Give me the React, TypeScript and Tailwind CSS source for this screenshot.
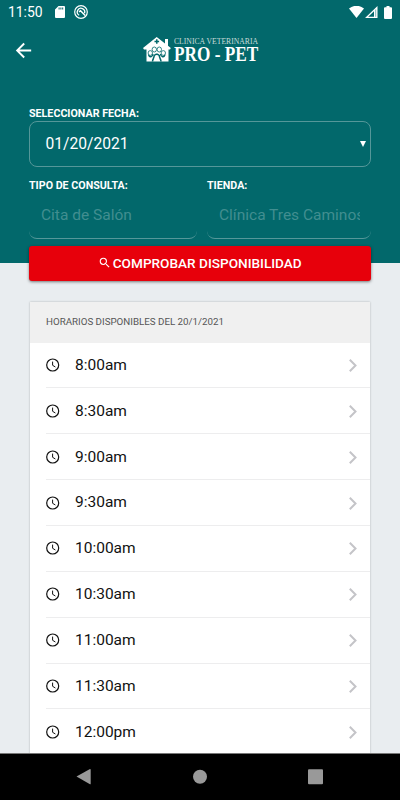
import React from "react";
import { MdArrowBack, MdSearch } from "react-icons/md";

const hours = [
  "8:00am",
  "8:30am",
  "9:00am",
  "9:30am",
  "10:00am",
  "10:30am",
  "11:00am",
  "11:30am",
  "12:00pm",
];

const StatusBar = () => {
  return (
    <div className="flex h-6 items-center pl-2 pr-[7px]">
      <span className="w-[47px] text-[13.9px] leading-6">11:50</span>
      <svg className="h-3 w-[10px]" viewBox="0 0 10 12">
        <path
          fill="#fff"
          fillRule="evenodd"
          d="M3.5 0H9a1 1 0 0 1 1 1v10a1 1 0 0 1-1 1H1a1 1 0 0 1-1-1V3.5zM3.6 1.6v2h1v-2zM5.4 1.6v2h1v-2zM7.2 1.6v2h1v-2z"
        />
      </svg>
      <svg className="ml-[9px] h-[14px] w-[14px]" viewBox="0 0 14 14" fill="none" stroke="#fff">
        <circle cx="7" cy="7" r="6.3" strokeWidth="1.2" />
        <path d="M5.2 10.2A3.7 3.7 0 1 1 10.5 8.2" strokeWidth="1.3" />
        <path d="M5 6.8 6.5 5.8l4.7 4.7" strokeWidth="1.5" />
      </svg>
      <div className="ml-auto flex items-center">
        <svg className="h-3 w-[15px]" viewBox="0 0 15 12">
          <path fill="#fff" d="M0 2.6a11.4 11.4 0 0 1 15 0L7.5 12z" />
        </svg>
        <svg className="ml-px h-3 w-[13px]" viewBox="0 0 13 12">
          <path fill="#fff" fillRule="evenodd" d="M12.5 0v12H0zM9 5.2 3.2 10.7H9z" />
          <path fill="#02686b" d="M10.2 3.6h1v7.2h-1z" opacity=".5" />
        </svg>
        <svg className="mr-px ml-[6px] h-[13px] w-[8px]" viewBox="0 0 8 13">
          <path fill="#fff" d="M2.5 0h3v1.2H7a1 1 0 0 1 1 1V12a1 1 0 0 1-1 1H1a1 1 0 0 1-1-1V2.2a1 1 0 0 1 1-1h1.5z" />
        </svg>
      </div>
    </div>
  );
};

const Logo = () => {
  return (
    <div className="flex h-[28px] w-[116px]">
      <svg className="h-[28px] w-[29px] shrink-0" viewBox="0 0 29 28">
        <path fill="#fff" d="M13.7 1 0 12l1 1.500h2.500V25.500h22V13.500h1.500l.8-1.500-2.800-2.200V3h-3v4.500z" />
        <path stroke="#02686b" strokeWidth="1.5" d="M13.800 3.200v4.600M11.500 5.500h4.600" />
        <path
          stroke="#02686b"
          strokeWidth="1.5"
          fill="none"
          d="M5.500 18.500c1 3.500 4 2.500 4.500-.5M22 18.500c-1 3.500-4 2.500-4.500-.5M9.500 25.500c0-2.500 1.800-3.500 1.800-6.500M18 25.500c0-2.500-1.800-3.500-1.800-6.500"
        />
        <g fill="#fff" stroke="#02686b" strokeWidth=".8">
          <ellipse cx="7.300" cy="17" rx="2.200" ry="2.400" />
          <ellipse cx="11.300" cy="13.500" rx="2.200" ry="2.500" />
          <ellipse cx="16.300" cy="13.500" rx="2.200" ry="2.500" />
          <ellipse cx="20.300" cy="17" rx="2.200" ry="2.400" />
        </g>
        <path fill="#02686b" d="M11 19c1-2 4.500-2 5.500 0l-1 .8c-.7-1-2.800-1-3.500 0z" />
      </svg>
      <div className="ml-[2px] pt-px font-['Liberation_Serif',serif]">
        <p className="h-[9px] w-[90px] origin-left scale-x-[0.925] whitespace-nowrap text-[8.3px] leading-[9px] text-[#c9dcd9]">
          CLINICA VETERINARIA
        </p>
        <p className="h-[17px] w-[96px] origin-left scale-x-[0.84] whitespace-nowrap text-[20.5px] font-bold leading-[17px]">
          PRO - PET
        </p>
      </div>
    </div>
  );
};

interface FieldProps {
  label: string;
  value: string;
}

const Field = ({ label, value }: FieldProps) => {
  return (
    <div className="min-w-0">
      <p className="text-[10.7px] font-bold leading-[15px]">{label}</p>
      <div className="relative flex h-[46px] items-center pr-[11px] pl-3">
        <div className="absolute inset-x-0 bottom-0 h-2 rounded-b-lg border-b border-[#559799]" />
        <p className="w-full overflow-hidden whitespace-nowrap text-[15.5px] text-[#418e90]">{value}</p>
      </div>
    </div>
  );
};

const Row = ({ hour }: { hour: string }) => {
  return (
    <div className="flex h-[45.85px] shrink-0 pl-[15.5px]">
      <div className="flex h-full flex-1 items-center border-b-[1.5px] border-[#ededee] pr-[13px]">
        <svg className="size-[14px]" viewBox="0 0 14 14" fill="none" stroke="#111">
          <circle cx="6.7" cy="7" r="6" strokeWidth="1.2" />
          <path d="M6.6 3.6v3.7l2.8 1.7" strokeWidth="1" />
        </svg>
        <span className="ml-[15.5px] pt-px text-[15.5px] text-[#111]">{hour}</span>
        <svg className="mt-px ml-auto h-[13px] w-2" viewBox="0 0 8 13" fill="none" stroke="#c4c4c8" strokeWidth="2">
          <path d="m.8.8 5.700 5.700-5.700 5.700" />
        </svg>
      </div>
    </div>
  );
};

export default function App() {
  return (
    <div className="flex h-[800px] w-[400px] flex-col overflow-hidden bg-[#e9edf0] font-[Roboto,sans-serif]">
      <header className="h-[263px] shrink-0 bg-[#02686b] text-white">
        <StatusBar />
        <div className="flex h-[52px] items-center pl-3">
          <MdArrowBack className="size-[23px]" />
          <div className="ml-[108px]">
            <Logo />
          </div>
        </div>
        <div className="px-[29px] pt-[30px]">
          <p className="text-[10.7px] font-bold leading-[15px]">SELECCIONAR FECHA:</p>
          <div className="flex h-[46px] items-center justify-between rounded-lg border border-[#559799] pr-1 pl-[15.5px]">
            <span className="pt-[2px] text-[15.6px]">01/20/2021</span>
            <svg className="h-[6px] w-[6px]" viewBox="0 0 6 6">
              <path fill="#fff" d="M0 0h6L3 6z" />
            </svg>
          </div>
          <div className="mt-[11px] grid grid-cols-[168px_164px] gap-[10px]">
            <Field label="TIPO DE CONSULTA:" value="Cita de Salón" />
            <Field label="TIENDA:" value="Clínica Tres Caminos" />
          </div>
          <button className="mt-[6.5px] flex h-[35px] w-full items-center justify-center rounded-[3px] bg-[#e7000b] text-[13.6px] font-medium shadow-[0_1px_3px_rgba(0,0,0,0.5)]">
            <MdSearch className="mr-px size-[13.5px]" />
            COMPROBAR DISPONIBILIDAD
          </button>
        </div>
      </header>
      <main className="min-h-0 flex-1 overflow-hidden pt-[39px]">
        <div className="mx-[30px] bg-white shadow-[0_0_2px_rgba(0,0,0,0.25)]">
          <div className="flex h-[40.6px] items-center bg-[#f0f0f0] pt-px pl-4 text-[9.75px] text-[#555]">
            HORARIOS DISPONIBLES DEL 20/1/2021
          </div>
          {hours.map((hour) => (
            <Row key={hour} hour={hour} />
          ))}
        </div>
      </main>
      <nav className="h-[47px] shrink-0 border-t border-[#777] bg-black text-[#999]">
        <svg className="h-[46px] w-full" viewBox="0 0 400 46" fill="currentColor">
          <path d="M76.5 22.5 90 15q.7 0 .7.7v14q0 .8-.7.5z" />
          <circle cx="200" cy="22.7" r="7" />
          <rect x="308" y="15.3" width="15" height="15" rx="1" />
        </svg>
      </nav>
    </div>
  );
}
